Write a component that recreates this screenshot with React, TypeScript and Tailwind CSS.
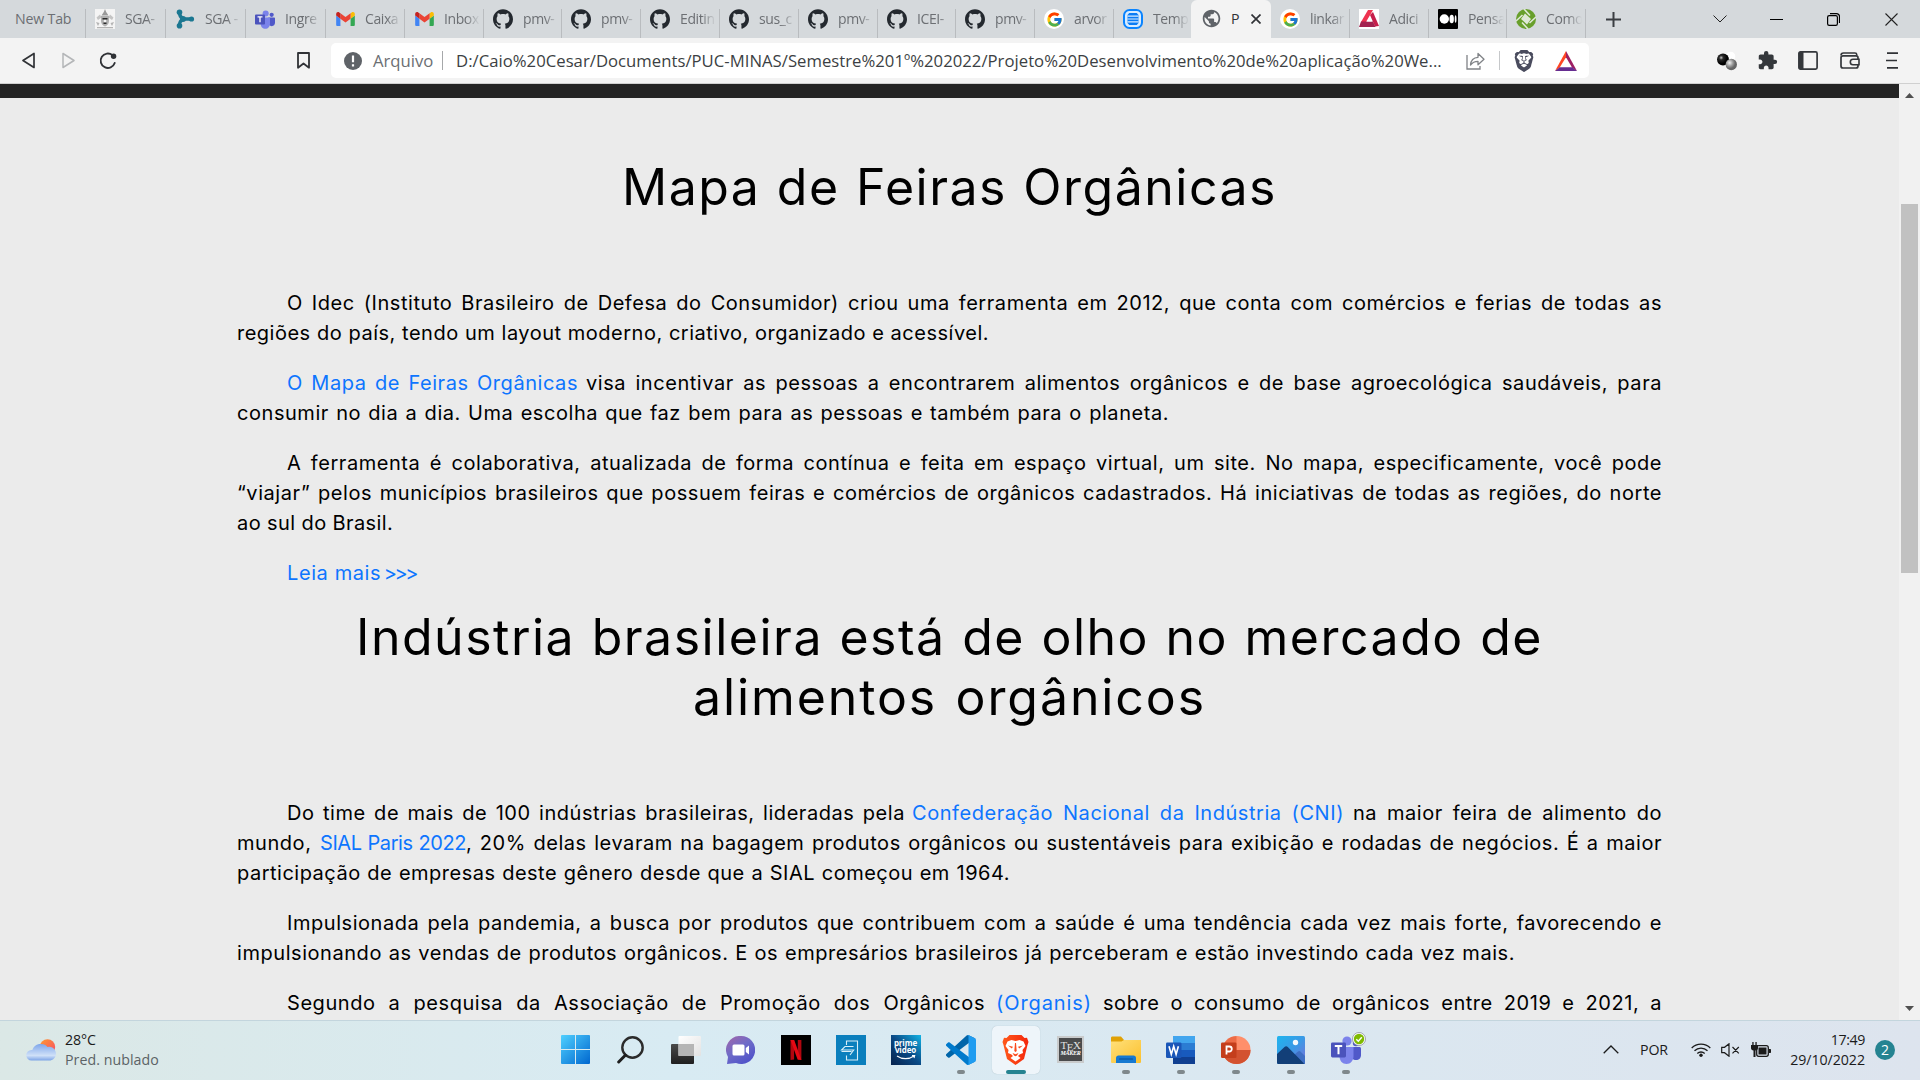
import type { ReactNode } from 'react';
import { FcGoogle } from 'react-icons/fc';
import { MdExtension, MdPublic } from 'react-icons/md';
import { SiBrave, SiGithub } from 'react-icons/si';

/* ---------- Tab favicons ---------- */

const Github = () => <SiGithub className="size-5 text-[#24292f]" />;

const Crest = () => (
  <svg viewBox="0 0 20 20" className="size-5">
    <rect width="20" height="20" fill="#f4f4f4" />
    <path d="M10 0l1.200 3 2.300 3.500H6.500L8.800 3z" fill="#9a9a9a" />
    <path d="M1.500 8.500l3.500-3 1.500 3-3.500 2.500zM18.500 8.500l-3.500-3-1.500 3 3.500 2.500z" fill="#c4c4c4" />
    <path d="M6 7h8v5c0 3-2 4.500-4 5.500-2-1-4-2.500-4-5.500z" fill="#b0b0b0" />
    <path d="M7.500 9h5v1.500h-5zM8.500 13.500h3V15h-3z" fill="#2b2b2b" />
    <circle cx="10" cy="12" r="1.300" fill="#f5f5f5" />
    <path d="M1 13l3.500 1-1.500 3zM19 13l-3.500 1 1.500 3zM2 18h16v1.200H2z" fill="#b4b4b4" />
  </svg>
);

const Tripod = () => (
  <svg viewBox="0 0 20 20" className="size-5">
    <path d="M4.500 3.500c0 3.500 1 5 3.500 6.500M4.500 16.500c0-3.500 1-5 3.500-6.500M7 10h10" stroke="#1b7791" strokeWidth="3.400" fill="none" />
    <circle cx="4.500" cy="3.300" r="2.800" fill="#1b7791" />
    <circle cx="4.500" cy="16.700" r="2.800" fill="#1b7791" />
    <circle cx="16.500" cy="10" r="2.600" fill="#1b7791" />
    <circle cx="8" cy="10" r="3" fill="#1b7791" />
  </svg>
);

const Teams = ({ className }: { className: string }) => (
  <svg viewBox="0 0 30 28" className={className}>
    <circle cx="25" cy="7" r="3.200" fill="#5059c9" />
    <path d="M20 11h8.500c.8 0 1.500.7 1.500 1.500V19c0 3-2 5-5 5s-5-2-5-5z" fill="#5059c9" />
    <circle cx="16" cy="5" r="4.600" fill="#7b83eb" />
    <path d="M9 11h13.500v9c0 4.500-3 8-7 8s-7-3-7-8z" fill="#7b83eb" />
    <rect x="0" y="6.500" width="15" height="15" rx="1.400" fill="#4b53bc" />
    <path d="M3.800 10h7.400M7.500 10v8.200" stroke="#fff" strokeWidth="2" />
  </svg>
);

const Gmail = () => (
  <svg viewBox="52 42 88 66" className="h-[14px] w-[19px]">
    <path fill="#4285f4" d="M58 108h14V74L52 59v43c0 3.320 2.690 6 6 6" />
    <path fill="#34a853" d="M120 108h14c3.320 0 6-2.690 6-6V59l-20 15" />
    <path fill="#fbbc04" d="M120 48v26l20-15v-8c0-7.420-8.470-11.650-14.400-7.200" />
    <path fill="#ea4335" d="M72 74V48l24 18 24-18v26L96 92" />
    <path fill="#c5221f" d="M52 51v8l20 15V48l-5.600-4.200c-5.940-4.450-14.400-.220-14.400 7.200" />
  </svg>
);

const Google = () => (
  <span className="flex size-5 items-center justify-center rounded-full bg-white">
    <FcGoogle className="size-[17px]" />
  </span>
);

const TextLines = () => (
  <svg viewBox="0 0 20 20" className="size-5">
    <rect x="1" y="1" width="18" height="18" rx="5.500" fill="#d9ecff" stroke="#0a84ff" strokeWidth="2" />
    <path d="M6.200 4h7.600l1.700 2v8l-1.700 2H6.200l-1.700-2V6z" fill="#0a7cf5" />
    <path d="M4.500 7.200h11M4.500 10h11M4.500 12.800h11" stroke="#d9ecff" strokeWidth="1.200" />
  </svg>
);

const RedTriangle = () => (
  <svg viewBox="0 0 20 20" className="size-5">
    <rect width="20" height="20" fill="#fff" />
    <path d="M9 1h5L7 13H2z" fill="#ef3350" />
    <path d="M11 6l3-3 6 14-4 .5z" fill="#c61f4b" />
    <path d="M2 12.500h12l2.500 5.500H0z" fill="#a3224f" />
    <path d="M10.500 8l2.500 4.500H7.800z" fill="#fff" />
  </svg>
);

const Medium = () => (
  <svg viewBox="0 0 20 20" className="size-5">
    <rect width="20" height="20" rx="1" fill="#000" />
    <circle cx="6.300" cy="10" r="4.700" fill="#fff" />
    <ellipse cx="13.700" cy="10" rx="2.200" ry="4.300" fill="#fff" />
    <ellipse cx="17.600" cy="10" rx="0.900" ry="3.800" fill="#fff" />
  </svg>
);

const GreenAperture = () => (
  <svg viewBox="0 0 20 20" className="size-5">
    <circle cx="10" cy="10" r="10" fill="#689f2b" />
    <path d="M8 0l6 6.500M20 8l-6.500 6M12 20l-6-6.500M0 12l6.500-6" stroke="#dfe8d6" strokeWidth="1.600" />
    <path d="M9 4.500l6 5.500-4 5.500L5 10z" fill="#dfe8d6" />
  </svg>
);

type Tab = { label: string; width: string; icon: ReactNode };

const tabsBefore: Tab[] = [
  { label: 'SGA-', width: 'w-[80px]', icon: <Crest /> },
  { label: 'SGA -', width: 'w-[80px]', icon: <Tripod /> },
  { label: 'Ingre', width: 'w-[80px]', icon: <Teams className="h-[19px] w-5" /> },
  { label: 'Caixa', width: 'w-[79px]', icon: <Gmail /> },
  { label: 'Inbox', width: 'w-[79px]', icon: <Gmail /> },
  { label: 'pmv-', width: 'w-[78px]', icon: <Github /> },
  { label: 'pmv-', width: 'w-[79px]', icon: <Github /> },
  { label: 'Editin', width: 'w-[79px]', icon: <Github /> },
  { label: 'sus_c', width: 'w-[79px]', icon: <Github /> },
  { label: 'pmv-', width: 'w-[79px]', icon: <Github /> },
  { label: 'ICEI-', width: 'w-[78px]', icon: <Github /> },
  { label: 'pmv-', width: 'w-[79px]', icon: <Github /> },
  { label: 'arvor', width: 'w-[79px]', icon: <Google /> },
  { label: 'Temp', width: 'w-[77px]', icon: <TextLines /> },
];

const tabsAfter: Tab[] = [
  { label: 'linkar', width: 'w-[79px]', icon: <Google /> },
  { label: 'Adici', width: 'w-[79px]', icon: <RedTriangle /> },
  { label: 'Pensa', width: 'w-[78px]', icon: <Medium /> },
  { label: 'Como', width: 'w-[79px]', icon: <GreenAperture /> },
];

const TabItem = ({ tab, last }: { tab: Tab; last?: boolean }) => (
  <div className={`flex h-[29px] shrink-0 items-start pl-[9px] ${tab.width} ${last ? '' : 'border-r border-[#b9bcbf]'}`}>
    <span className="flex size-5 shrink-0 items-center justify-center">{tab.icon}</span>
    <span className="ml-2.5 h-5 w-[36px] text-[14px] leading-[19px] tracking-[-0.400px] whitespace-nowrap text-[#6c6f73] [mask-image:linear-gradient(to_right,black_60%,transparent_100%)]">
      {tab.label}
    </span>
  </div>
);

const TabStrip = () => (
  <div className="flex h-[38px] shrink-0 items-end bg-[#d5d9dc]">
    <div className="h-[29px] w-[86px] shrink-0 border-r border-[#b9bcbf] pl-[15px] text-[14.200px] leading-[19px] tracking-[-0.200px] text-[#6c6f73]">New Tab</div>
    {tabsBefore.map((tab, i) => (
      <TabItem key={i} tab={tab} last={i === tabsBefore.length - 1} />
    ))}
    <div className="flex h-[38px] w-[80px] shrink-0 items-start rounded-t-md bg-[#f3f3f3] pt-[9px] pl-[10px]">
      <MdPublic className="-mt-px size-[21px] text-[#5f6368]" />
      <span className="ml-[9px] text-[14.200px] leading-[19px] text-[#303236]">P</span>
      <svg viewBox="0 0 10 10" className="mt-[5px] ml-[11px] size-[10px]">
        <path d="M0.500 0.500l9 9M9.500 0.500l-9 9" stroke="#303236" strokeWidth="1.700" />
      </svg>
    </div>
    {tabsAfter.map((tab, i) => (
      <TabItem key={i} tab={tab} />
    ))}
    <div className="flex h-[38px] flex-1 items-center">
      <svg viewBox="0 0 15 15" className="ml-5 size-[15px]">
        <path d="M7.500 0v15M0 7.500h15" stroke="#3b3e42" strokeWidth="2" />
      </svg>
      <svg viewBox="0 0 14 8" className="ml-[92px] h-2 w-3.5">
        <path d="M0.500 0.500L7 7l6.500-6.500" stroke="#222" fill="none" />
      </svg>
      <svg viewBox="0 0 13 1" className="ml-[43px] h-px w-[13px]">
        <path d="M0 0.500h13" stroke="#000" />
      </svg>
      <svg viewBox="0 0 13 13" className="ml-[44px] size-[13px]">
        <rect x="0.600" y="2.600" width="9.800" height="9.800" rx="1.600" fill="none" stroke="#000" strokeWidth="1.200" />
        <path d="M3 0.600h6.500a3 3 0 0 1 3 3V10" fill="none" stroke="#000" strokeWidth="1.200" />
      </svg>
      <svg viewBox="0 0 13 13" className="ml-[45px] size-[13px]">
        <path d="M0.500 0.500l12 12M12.500 0.500l-12 12" stroke="#222" strokeWidth="1.100" />
      </svg>
    </div>
  </div>
);

/* ---------- Address bar ---------- */

const Toolbar = () => (
  <div className="flex h-[46px] shrink-0 items-center border-b border-[#d0d0d0] bg-[#f3f3f3]">
    <svg viewBox="0 0 13 17" className="ml-[22px] h-[17px] w-[13px]">
      <path d="M12 1.500v14L1 8.500z" fill="none" stroke="#303236" strokeWidth="1.700" strokeLinejoin="round" />
    </svg>
    <svg viewBox="0 0 13 17" className="ml-[27px] h-[17px] w-[13px]">
      <path d="M1 1.500v14l11-7z" fill="none" stroke="#b4b6b8" strokeWidth="1.500" strokeLinejoin="round" />
    </svg>
    <svg viewBox="0 0 18 18" className="ml-6 size-[18px]">
      <path d="M13.500 3.200A7.200 7.200 0 1 0 15.700 11" fill="none" stroke="#303236" strokeWidth="1.900" strokeLinecap="round" />
      <circle cx="14.600" cy="4.300" r="2.700" fill="#303236" />
    </svg>
    <svg viewBox="0 0 13 17" className="ml-[180px] h-[17px] w-[13px]">
      <path d="M1 1h11v14.700l-5.500-4.200L1 15.700z" fill="none" stroke="#303236" strokeWidth="1.800" strokeLinejoin="round" />
    </svg>
    <div className="ml-[21px] flex h-[35px] w-[1258px] shrink-0 items-center rounded-[5px] bg-white text-[16.700px] whitespace-nowrap">
      <svg viewBox="0 0 18 18" className="ml-[13px] size-[18px] shrink-0">
        <circle cx="9" cy="9" r="9" fill="#5f6368" />
        <path d="M9 3.500v6.700M9 12.300v2.200" stroke="#fff" strokeWidth="2.200" />
      </svg>
      <span className="ml-[11px] w-[60px] text-[#6c6f73]">Arquivo</span>
      <span className="ml-[9px] h-[19px] w-px shrink-0 bg-[#a6a8aa]" />
      <span className="ml-[13px] w-[986px] shrink-0 tracking-[0.020px] text-[#3c3f43]">
        D:/Caio%20Cesar/Documents/PUC-MINAS/Semestre%201º%202022/Projeto%20Desenvolvimento%20de%20aplicação%20We...
      </span>
      <svg viewBox="0 0 19 18" className="ml-6 h-[18px] w-[19px] shrink-0">
        <path d="M1 3v14h13v-3" fill="none" stroke="#808387" strokeWidth="1.300" />
        <path d="M4.500 13c.4-5 3-7.500 7.500-7.700V1.500l6 5.700-6 5.500V9.300c-3.500 0-5.500 1-7.500 3.700z" fill="none" stroke="#808387" strokeWidth="1.300" strokeLinejoin="round" />
      </svg>
      <span className="ml-3.5 h-[19px] w-px shrink-0 bg-[#c6c8ca]" />
      <SiBrave className="ml-[13px] size-[22px] shrink-0 text-[#4a4c5e]" />
      <svg viewBox="0 0 22 20" className="ml-5 h-5 w-[22px] shrink-0">
        <path d="M11 0v6.300L4.700 16.500 0 20z" fill="#ff4724" />
        <path d="M11 0l11 20-5-3.500L11 6.300z" fill="#9e1f63" />
        <path d="M0 20l4.700-3.700h12.600L22 20z" fill="#662d91" />
      </svg>
    </div>
    <svg viewBox="0 0 20 20" className="ml-[128px] size-5">
      <defs>
        <radialGradient id="ballDark" cx="35%" cy="35%">
          <stop offset="0" stopColor="#c8c8c8" />
          <stop offset=".35" stopColor="#2a2a2a" />
          <stop offset="1" stopColor="#000" />
        </radialGradient>
        <radialGradient id="ballGray" cx="35%" cy="35%">
          <stop offset="0" stopColor="#f2f2f2" />
          <stop offset=".6" stopColor="#999" />
          <stop offset="1" stopColor="#666" />
        </radialGradient>
      </defs>
      <circle cx="13.500" cy="5.500" r="4.800" fill="#fff" />
      <circle cx="6" cy="8.500" r="6" fill="url(#ballDark)" />
      <circle cx="14.300" cy="13.500" r="5.700" fill="url(#ballGray)" />
    </svg>
    <MdExtension className="ml-5 size-[21px] text-[#34373b]" />
    <svg viewBox="0 0 20 19" className="ml-5 h-[19px] w-5">
      <rect x="0.900" y="0.900" width="18.200" height="17.200" rx="1.500" fill="none" stroke="#34373b" strokeWidth="1.700" />
      <path d="M1 1h4.500v17H1z" fill="#34373b" />
    </svg>
    <svg viewBox="0 0 20 17" className="ml-[22px] h-[17px] w-5">
      <path d="M1 3.500c0-1.500 1-2.500 2.500-2.500H15c1 0 1.700.5 1.700 1.500v1.300" fill="none" stroke="#34373b" strokeWidth="1.600" />
      <rect x="1" y="3.800" width="17" height="12.200" rx="2" fill="none" stroke="#34373b" strokeWidth="1.700" />
      <path d="M19 7.300h-6a2.700 2.700 0 0 0 0 5.400h6z" fill="#f3f3f3" stroke="#34373b" strokeWidth="1.600" />
    </svg>
    <svg viewBox="0 0 12 17" className="ml-[26px] h-[17px] w-3">
      <path d="M1 1.200h11M0 8.500h11M1 15.800h11" stroke="#303236" strokeWidth="1.700" />
    </svg>
  </div>
);

/* ---------- Article ---------- */

// A single set line: stretched to the width given by its class.
const Line = ({ className, children }: { className: string; children: ReactNode }) => (
  <span className={`block whitespace-nowrap [text-align-last:justify] ${className}`}>{children}</span>
);

// A line made of text and link runs.
const Runs = ({ className, children }: { className: string; children: ReactNode }) => (
  <span className={`flex whitespace-nowrap [text-align-last:justify] ${className}`}>{children}</span>
);

const link = 'shrink-0 text-[#0d75ff]';

const Article = () => (
  <main className="flex-1 bg-[#ebebeb] font-[Inter,sans-serif] text-black">
    <div className="h-3.5 bg-[#242424]" />
    <div className="ml-[237px] w-[1425px] pt-[59px] text-xl leading-[30px] font-normal tracking-[0.550px]">
      <h1 className="flex flex-col items-center text-[50px] leading-[60px] tracking-[1.500px]">
        <Line className="w-[655px]">Mapa de Feiras Orgânicas</Line>
      </h1>
      <p className="mt-[71px]">
        <Line className="ml-[50px]">O Idec (Instituto Brasileiro de Defesa do Consumidor) criou uma ferramenta em 2012, que conta com comércios e ferias de todas as</Line>
        <Line className="w-[752px] tracking-[0.500px]">regiões do país, tendo um layout moderno, criativo, organizado e acessível.</Line>
      </p>
      <p className="mt-5">
        <Runs className="ml-[50px]">
          <a className={`${link} w-[291px]`}>O Mapa de Feiras Orgânicas</a>
          <span className="ml-2 flex-1">visa incentivar as pessoas a encontrarem alimentos orgânicos e de base agroecológica saudáveis, para</span>
        </Runs>
        <Line className="w-[932px]">consumir no dia a dia. Uma escolha que faz bem para as pessoas e também para o planeta.</Line>
      </p>
      <p className="mt-5">
        <Line className="ml-[50px]">A ferramenta é colaborativa, atualizada de forma contínua e feita em espaço virtual, um site. No mapa, especificamente, você pode</Line>
        <Line className="w-full">“viajar” pelos municípios brasileiros que possuem feiras e comércios de orgânicos cadastrados. Há iniciativas de todas as regiões, do norte</Line>
        <Line className="w-[155px] tracking-[0.400px]">ao sul do Brasil.</Line>
      </p>
      <p className="mt-5 pl-[50px]">
        <a className="flex w-[129px] justify-between tracking-[0.600px] whitespace-nowrap text-[#0d75ff]">
          <span>Leia mais</span> <span className="tracking-[-2.500px]">&gt;&gt;&gt;</span>
        </a>
      </p>
      <h2 className="mt-[19px] flex flex-col items-center text-[50px] leading-[60px] tracking-[1.500px]">
        <Line className="w-[1187px]">Indústria brasileira está de olho no mercado de</Line>
        <Line className="w-[513px] tracking-[1.900px]">alimentos orgânicos</Line>
      </h2>
      <p className="mt-[71px]">
        <Runs className="ml-[50px]">
          <span className="w-[618px] shrink-0">Do time de mais de 100 indústrias brasileiras, lideradas pela</span>
          <a className={`${link} ml-[7px] w-[432px]`}>Confederação Nacional da Indústria (CNI)</a>
          <span className="ml-[9px] flex-1">na maior feira de alimento do</span>
        </Runs>
        <Runs className="w-full">
          <span className="w-[76px] shrink-0">mundo,</span>
          <a className={`${link} ml-[7px] w-[146px] tracking-[-0.450px]`}>SIAL Paris 2022</a>
          <span className="flex-1">, 20% delas levaram na bagagem produtos orgânicos ou sustentáveis para exibição e rodadas de negócios. É a maior</span>
        </Runs>
        <Line className="w-[773px] tracking-[0.500px]">participação de empresas deste gênero desde que a SIAL começou em 1964.</Line>
      </p>
      <p className="mt-5">
        <Line className="ml-[50px]">Impulsionada pela pandemia, a busca por produtos que contribuem com a saúde é uma tendência cada vez mais forte, favorecendo e</Line>
        <Line className="w-[1278px]">impulsionando as vendas de produtos orgânicos. E os empresários brasileiros já perceberam e estão investindo cada vez mais.</Line>
      </p>
      <p className="mt-5">
        <Runs className="ml-[50px]">
          <span className="w-[698px] shrink-0">Segundo a pesquisa da Associação de Promoção dos Orgânicos</span>
          <a className={`${link} ml-[11px] w-[96px] tracking-[0.900px]`}>(Organis)</a>
          <span className="ml-[11px] flex-1">sobre o consumo de orgânicos entre 2019 e 2021, a</span>
        </Runs>
      </p>
    </div>
  </main>
);

const Scrollbar = () => (
  <div className="flex w-[21px] shrink-0 flex-col items-center bg-[#f1f1f1] py-[9px]">
    <svg viewBox="0 0 9 5" className="h-[5px] w-[9px]"><path d="M4.500 0L9 5H0z" fill="#505050" /></svg>
    <div className="mt-[106px] h-[369px] w-[17px] bg-[#c1c1c1]" />
    <svg viewBox="0 0 9 5" className="mt-auto h-[5px] w-[9px]"><path d="M0 0h9L4.500 5z" fill="#505050" /></svg>
  </div>
);

/* ---------- Taskbar ---------- */

const WindowsLogo = () => (
  <svg viewBox="0 0 29 29" className="size-[29px]">
    <defs>
      <linearGradient id="win" x1="0" y1="0" x2="1" y2="1">
        <stop offset="0" stopColor="#4fd0ff" />
        <stop offset="1" stopColor="#0067cf" />
      </linearGradient>
    </defs>
    <path d="M1 0h13v14H0V1a1 1 0 0 1 1-1zM15 0h13a1 1 0 0 1 1 1v13H15zM0 15h14v14H1a1 1 0 0 1-1-1zM15 15h14v13a1 1 0 0 1-1 1H15z" fill="url(#win)" />
  </svg>
);

const Search = () => (
  <svg viewBox="0 0 27 28" className="h-7 w-[27px]">
    <circle cx="15.500" cy="11.500" r="10.200" fill="none" stroke="#2b2b2b" strokeWidth="2.400" />
    <path d="M8.300 19.200L1.700 26" stroke="#1e1e1e" strokeWidth="3" strokeLinecap="round" />
  </svg>
);

const TaskView = () => (
  <svg viewBox="0 0 30 28" className="h-7 w-[30px]">
    <defs>
      <linearGradient id="tvFront" x2="1" y2="1"><stop stopColor="#fff" /><stop offset="1" stopColor="#e2e2e2" /></linearGradient>
      <linearGradient id="tvBack" x2="0" y2="1"><stop stopColor="#4a4a4a" /><stop offset="1" stopColor="#1f1f1f" /></linearGradient>
    </defs>
    <rect y="8" width="23" height="20" rx="1" fill="url(#tvBack)" />
    <rect x="7.500" width="22.500" height="20" rx="1" fill="url(#tvFront)" />
    <path d="M7.500 8H23v12H7.500z" fill="#b5b5b5" />
  </svg>
);

const Chat = () => (
  <svg viewBox="0 0 29 28" className="h-7 w-[29px]">
    <defs>
      <linearGradient id="chat" x2=".7" y2="1"><stop stopColor="#a466a8" /><stop offset=".5" stopColor="#6f6bc8" /><stop offset="1" stopColor="#4f52c9" /></linearGradient>
    </defs>
    <path d="M15 0a14 14 0 1 1-5 27L1 28l1-7A14 14 0 0 1 15 0z" fill="url(#chat)" />
    <rect x="6.500" y="8.500" width="12" height="11" rx="1.500" fill="#fff" />
    <path d="M19.800 12l3.200-2.500v9L19.800 16z" fill="#fff" />
  </svg>
);

const Netflix = () => (
  <svg viewBox="0 0 30 30" className="size-[30px]">
    <rect width="30" height="30" fill="#000" />
    <path d="M9.500 5h3.600v19.500l-3.600.5zM16.800 5h3.600v20l-3.600-.5z" fill="#b1060f" />
    <path d="M9.500 5h3.700l7.200 20-3.800-.5z" fill="#e50914" />
  </svg>
);

const BlueDoc = () => (
  <svg viewBox="0 0 30 30" className="size-[30px]">
    <rect width="30" height="30" fill="#0a7fbd" />
    <path d="M10.500 10V6h11v19h-11v-4.500" fill="none" stroke="#d8eef8" strokeWidth="1.100" />
    <path d="M17.500 11.500H9L5.500 15h12.200L14 20M5.500 16.500h10" fill="none" stroke="#d8eef8" strokeWidth="1.100" />
  </svg>
);

const PrimeVideo = () => (
  <span className="flex size-[30px] flex-col items-center bg-linear-to-tr from-[#06224d] via-[#0a4a86] to-[#14b4e6] pt-1 font-['Open_Sans',sans-serif] text-[8px] leading-[7px] font-bold text-white">
    <span>prime</span>
    <span>video</span>
    <svg viewBox="0 0 20 5" className="mt-0.5 h-[5px] w-5"><path d="M1 1c5 3.500 12 3.500 17 0M16 0.500h2.700L18 3" fill="none" stroke="#fff" strokeWidth="1.100" /></svg>
  </span>
);

const VsCode = () => (
  <svg viewBox="0 0 100 100" className="size-[30px]">
    <path fill="#0065a9" d="M96.460 10.800L75.860.880C73.470-.270 70.620.210 68.750 2.080L1.300 63.580c-1.810 1.650-1.810 4.510 0 6.160l5.510 5.010c1.490 1.350 3.720 1.450 5.320.240L93.360 13.370C96.090 11.300 100 13.250 100 16.670v-.240c0-2.400-1.380-4.590-3.540-5.630z" />
    <path fill="#007acc" d="M96.460 89.200l-20.600 9.920c-2.390 1.150-5.240.670-7.110-1.200L1.300 36.420c-1.810-1.650-1.810-4.510 0-6.160l5.510-5.010c1.490-1.350 3.720-1.450 5.320-.240l81.230 61.620c2.730 2.070 6.640.120 6.640-3.300v.240c0 2.400-1.380 4.590-3.540 5.630z" />
    <path fill="#1f9cf0" d="M75.860 99.130c-2.390 1.150-5.240.660-7.110-1.210C71.060 100.220 75 98.590 75 95.330V4.670C75 1.410 71.060-.220 68.750 2.080 70.620.210 73.470-.270 75.860.870l20.600 9.910C98.620 11.820 100 14.010 100 16.410v67.180c0 2.400-1.380 4.590-3.540 5.630z" />
  </svg>
);

const BraveLion = () => (
  <svg viewBox="0 0 26 30" className="h-[30px] w-[27px]">
    <defs><linearGradient id="brave" x2="1"><stop stopColor="#ff5a1c" /><stop offset="1" stopColor="#f4260c" /></linearGradient></defs>
    <path d="M7 0h12l3 3 2.500-.3L26 7l-1 3-3.500 14L13 30 4.500 24 1 10 0 7l1.500-4.300L4 3z" fill="url(#brave)" />
    <path d="M13 6l4-1 4 1.500 2 4.500-3 4 .5 3-3.500 1.500-1.500 1.500L18 23l-5 3.500L8 23l2.500-2L9 19.500 5.500 18l.5-3-3-4L5 6.500 9 5z" fill="#fff" />
    <path d="M5.500 10.500l5 1.300-1.200 1.700zM20.500 10.500l-5 1.300 1.200 1.700zM10 18l3 1.300 3-1.300-1.500 2.500-1.500.7-1.500-.7zM12.500 8h1l.7 8-1.200 1-1.200-1z" fill="#fb4a1c" />
  </svg>
);

const TexMaker = () => (
  <span className="flex size-[27px] flex-col items-center border-2 border-[#c9cbcc] bg-[#4a4b4c] pt-0.5 font-['Liberation_Serif',serif] text-white">
    <span className="text-[11px] leading-[10px] tracking-[-0.500px] text-[#e2e2e2]">T<span className="relative top-0.5">E</span>X</span>
    <span className="text-[6px] leading-[7px] font-bold tracking-[-0.300px] italic">MAKER</span>
  </span>
);

const Explorer = () => (
  <svg viewBox="0 0 30 27" className="h-[27px] w-[30px]">
    <defs><linearGradient id="folder" x2="1" y2="1"><stop stopColor="#ffe07a" /><stop offset="1" stopColor="#fbc02d" /></linearGradient></defs>
    <path d="M0 2c0-1 .5-1.500 1.500-1.500H10L13 4h15.500c1 0 1.500.5 1.500 1.500V12H0z" fill="#e0a106" />
    <path d="M0 5.500h10.500L13 4h17v21.500c0 1-.5 1.500-1.500 1.500h-27C.5 27 0 26.500 0 25.500z" fill="url(#folder)" />
    <path d="M5 27v-5c0-1.500 1-2.500 2.500-2.500h15c1.500 0 2.500 1 2.500 2.500v5z" fill="#1679d1" />
    <path d="M8.500 23h13" stroke="#0a4f94" strokeWidth="1.200" strokeLinecap="round" />
  </svg>
);

const Word = () => (
  <svg viewBox="0 0 30 28" className="h-7 w-[30px]">
    <path d="M7 0h22v7H7z" fill="#41a5ee" />
    <path d="M7 7h22v7H7z" fill="#2b7cd3" />
    <path d="M7 14h22v7H7z" fill="#185abd" />
    <path d="M7 21h22v7H7z" fill="#103f91" />
    <rect y="6.500" width="15.500" height="15.500" rx="1.300" fill="#1a56b8" />
    <path d="M3 10.300l2.300 8 2.400-8 2.400 8 2.300-8" fill="none" stroke="#fff" strokeWidth="1.600" />
  </svg>
);

const PowerPoint = () => (
  <svg viewBox="0 0 30 28" className="h-7 w-[30px]">
    <path d="M15.500 0A14 14 0 0 0 15.500 28 14 14 0 0 0 29.500 14z" fill="#ed6c47" />
    <path d="M15.500 0a14 14 0 0 1 14 14h-14z" fill="#ff8f6b" />
    <path d="M1.500 14h28a14 14 0 0 1-28 0z" fill="#d35230" />
    <rect y="6.500" width="15.500" height="15.500" rx="1.300" fill="#c43e1c" />
    <path d="M5.500 18.500v-8h2.800a2.500 2.500 0 0 1 0 5H5.500" fill="none" stroke="#fff" strokeWidth="1.800" />
  </svg>
);

const Photos = () => (
  <svg viewBox="0 0 28 28" className="size-7">
    <defs><linearGradient id="sky" x2="1" y2="1"><stop stopColor="#1fb4ee" /><stop offset=".5" stopColor="#3a9ae6" /><stop offset="1" stopColor="#7a6fd8" /></linearGradient></defs>
    <rect width="28" height="28" rx="1.500" fill="url(#sky)" />
    <path d="M17 19l4-3.500c.8-.7 1.700-.7 2.400 0L28 20v8H15z" fill="#3f6fc4" />
    <path d="M0 18l7.500-7c1-1 2.300-1 3.300 0L27 27.500l-.5.500H1.500A1.500 1.500 0 0 1 0 26.500z" fill="#123f78" />
    <circle cx="18.500" cy="6.500" r="2.700" fill="#f4f9fd" />
  </svg>
);

const TeamsOnline = () => (
  <span className="relative">
    <Teams className="h-7 w-[30px]" />
    <svg viewBox="0 0 14 14" className="absolute -top-1 left-[21px] size-3.5">
      <circle cx="7" cy="7" r="6.500" fill="#fff" stroke="#8b9196" strokeWidth=".8" />
      <circle cx="7" cy="7" r="5.200" fill="#7fba00" />
      <path d="M4.300 7.200l2 2 3.500-4" fill="none" stroke="#fff" strokeWidth="1.400" />
    </svg>
  </span>
);

type TaskbarApp = { icon: ReactNode; state?: 'running' | 'active' };

const apps: TaskbarApp[] = [
  { icon: <WindowsLogo /> },
  { icon: <Search /> },
  { icon: <TaskView /> },
  { icon: <Chat /> },
  { icon: <Netflix /> },
  { icon: <BlueDoc /> },
  { icon: <PrimeVideo /> },
  { icon: <VsCode />, state: 'running' },
  { icon: <BraveLion />, state: 'active' },
  { icon: <TexMaker /> },
  { icon: <Explorer />, state: 'running' },
  { icon: <Word />, state: 'running' },
  { icon: <PowerPoint />, state: 'running' },
  { icon: <Photos />, state: 'running' },
  { icon: <TeamsOnline />, state: 'running' },
];

const Taskbar = () => (
  <footer className="flex h-[60px] shrink-0 items-center border-t border-[#c3d5dd] bg-linear-to-r from-[#dbe8e6] via-[#d8ebf3] via-35% to-[#dde4ee] pb-0.5 text-[14.200px] leading-5 tracking-[-0.100px] text-[#1b1b1b]">
    <div className="flex w-[548px] items-center">
      <svg viewBox="0 0 30 22" className="ml-[26px] h-[22px] w-[30px]">
        <defs>
          <linearGradient id="sun" x2="1" y2="1"><stop stopColor="#ff9a2e" /><stop offset="1" stopColor="#f7496b" /></linearGradient>
          <linearGradient id="cloud" x2="0" y2="1"><stop stopColor="#7ea6ea" /><stop offset=".7" stopColor="#cfe0f8" /><stop offset="1" stopColor="#7da4e6" /></linearGradient>
        </defs>
        <circle cx="21.500" cy="8" r="7.700" fill="url(#sun)" />
        <path d="M5.500 21.500a5.300 5.300 0 0 1 0-10.600h.8a9 9 0 0 1 15.200-3 6.700 6.700 0 1 1 3 13.600z" fill="url(#cloud)" />
      </svg>
      <div className="mt-px ml-[9px] flex flex-col">
        <span>28°C</span>
        <span className="tracking-[0.050px] text-[#5c6366]">Pred. nublado</span>
      </div>
    </div>
    {apps.map((app, i) => (
      <div key={i} className="flex h-[58px] w-[55px] shrink-0 items-center justify-center">
        <div className={`flex h-12 w-12 flex-col items-center rounded-[5px] ${app.state === 'active' ? 'bg-[#eef5fa] shadow-[0_0_1px_#9fb3bd]' : ''}`}>
          <span className="flex h-12 shrink-0 items-center justify-center">{app.icon}</span>
          {app.state === 'running' && <span className="-mt-1 h-1 w-2 shrink-0 rounded-full bg-[#7f888c]" />}
          {app.state === 'active' && <span className="-mt-1 h-1 w-5 shrink-0 rounded-full bg-[#258391]" />}
        </div>
      </div>
    ))}
    <div className="flex flex-1 items-center">
      <svg viewBox="0 0 16 9" className="ml-[230px] h-[9px] w-4">
        <path d="M0.700 8.300L8 1l7.300 7.300" fill="none" stroke="#1b1b1b" strokeWidth="1.300" />
      </svg>
      <span className="ml-[21px] w-[28px] tracking-[-0.100px]">POR</span>
      <svg viewBox="0 0 20 15" className="ml-[23px] h-[15px] w-5">
        <path d="M0.700 6a13 13 0 0 1 18.600 0M3.500 8.800a9.200 9.200 0 0 1 13 0M6.300 11.500a5.300 5.300 0 0 1 7.400 0" fill="none" stroke="#1b1b1b" strokeWidth="1.300" />
        <circle cx="10" cy="13.300" r="1.700" fill="#1b1b1b" />
      </svg>
      <svg viewBox="0 0 19 14" className="ml-[10px] h-3.5 w-[19px]">
        <path d="M0.700 4.300h2.800L8 0.800v12.400L3.500 9.700H0.700zM11.500 4l6.300 6.300M17.800 4l-6.300 6.300" fill="none" stroke="#1b1b1b" strokeWidth="1.200" />
      </svg>
      <svg viewBox="0 0 20 16" className="ml-[11px] h-4 w-5">
        <rect x="5.700" y="3.700" width="11.600" height="10.600" rx="2" fill="none" stroke="#1b1b1b" strokeWidth="1.300" />
        <path d="M7.500 5.500h8v7h-8zM18 7h1.300a.7.700 0 0 1 .7.700v2.600a.7.700 0 0 1-.7.700H18zM0 3h7v3c0 1.500-1 2.500-2.500 2.500v6.500h-2V8.500C1 8.500 0 7.500 0 6zM1.300 0h1.300v3H1.300zM4.400 0h1.300v3H4.400z" fill="#1b1b1b" />
      </svg>
      <div className="flex w-[94px] flex-col items-end">
        <span className="tracking-[-0.400px]">17:49</span>
        <span className="tracking-[-0.050px]">29/10/2022</span>
      </div>
      <span className="ml-[10px] flex size-5 items-center justify-center rounded-full bg-[#258391] text-[14px] text-white">2</span>
    </div>
  </footer>
);

export default function App() {
  return (
    <div className="flex h-[1080px] w-[1920px] flex-col overflow-hidden font-['Open_Sans',sans-serif]">
      <TabStrip />
      <Toolbar />
      <div className="flex h-[936px] shrink-0 overflow-hidden">
        <Article />
        <Scrollbar />
      </div>
      <Taskbar />
    </div>
  );
}
